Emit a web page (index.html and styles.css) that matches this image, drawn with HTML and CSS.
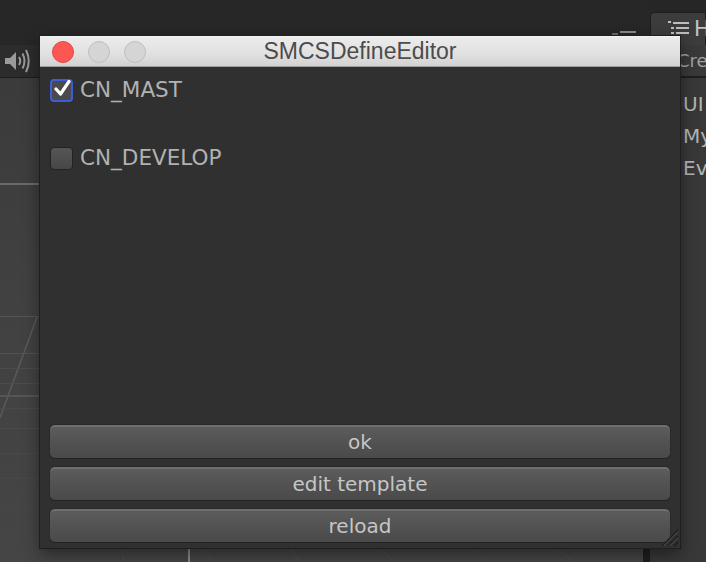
FILE: index.html
```html
<!DOCTYPE html>
<html>
<head>
<meta charset="utf-8">
<link rel="stylesheet" href="styles.css">
</head>
<body>
<div class="editor">
  <div class="top-left">
    <svg class="menu-stub" width="24" height="5" viewBox="0 0 24 5">
      <rect x="8" y="0" width="16" height="2" fill="#8a8a8a"/>
      <rect x="0" y="2" width="6" height="3" fill="#6a6a6a"/>
    </svg>
  </div>
  <div class="top-right">
    <div class="tab">
      <svg class="list-icon" width="22" height="16" viewBox="0 0 22 16">
        <rect x="0" y="0" width="3" height="2" fill="#bdbdbd"/>
        <rect x="5" y="1" width="16" height="2" fill="#bdbdbd"/>
        <rect x="3" y="6" width="3" height="2" fill="#bdbdbd"/>
        <rect x="8" y="6" width="13" height="2" fill="#bdbdbd"/>
        <rect x="3" y="11" width="3" height="2" fill="#bdbdbd"/>
        <rect x="8" y="11" width="13" height="2" fill="#bdbdbd"/>
      </svg>
      <span class="tab-label">H</span>
    </div>
  </div>
  <div class="scene-toolbar">
    <svg class="speaker" width="28" height="26" viewBox="0 0 28 26">
      <path d="M1 10 L6 10 L12 4 L12 22 L6 16 L1 16 Z" fill="#9a9a9a"/>
      <path d="M15 9 Q17.5 13 15 17" stroke="#9a9a9a" stroke-width="2" fill="none"/>
      <path d="M18.5 5.5 Q22.5 13 18.5 20.5" stroke="#9a9a9a" stroke-width="2" fill="none"/>
      <path d="M22 2 Q27.5 13 22 24" stroke="#9a9a9a" stroke-width="2" fill="none"/>
    </svg>
  </div>
  <div class="hier-toolbar"><span class="create">Create</span></div>
  <div class="scene">
    <svg class="grid" width="650" height="484" viewBox="0 0 650 484">
      <rect x="0" y="105" width="650" height="2" fill="#6a6a6a"/>
      <rect x="0" y="238" width="650" height="1" fill="#555"/>
      <line x1="37" y1="239" x2="0" y2="340" stroke="#5a5a5a" stroke-width="1.5"/>
      <rect x="0" y="275" width="650" height="1" fill="#525252"/>
      <rect x="0" y="290" width="650" height="1" fill="#4c4c4c"/>
      <rect x="0" y="305" width="650" height="1" fill="#4c4c4c"/>
      <rect x="0" y="317" width="650" height="2" fill="#555"/>
      <rect x="0" y="330" width="650" height="1" fill="#4a4a4a"/>
      <rect x="0" y="350" width="650" height="1" fill="#4a4a4a"/>
      <rect x="0" y="375" width="650" height="1" fill="#484848"/>
      <rect x="0" y="400" width="650" height="1" fill="#484848"/>
      <rect x="0" y="430" width="650" height="1" fill="#474747"/>
      <line x1="189" y1="465" x2="189" y2="484" stroke="#8a8a8a" stroke-width="2"/>
      <line x1="120" y1="470" x2="125" y2="484" stroke="#4d4d4d" stroke-width="1"/>
      <line x1="205" y1="470" x2="212" y2="484" stroke="#4d4d4d" stroke-width="1"/>
      <line x1="290" y1="470" x2="300" y2="484" stroke="#4d4d4d" stroke-width="1"/>
      <line x1="380" y1="470" x2="395" y2="484" stroke="#4d4d4d" stroke-width="1"/>
      <line x1="470" y1="470" x2="488" y2="484" stroke="#4d4d4d" stroke-width="1"/>
      <line x1="555" y1="470" x2="575" y2="484" stroke="#4d4d4d" stroke-width="1"/>
      <rect x="643" y="465" width="7" height="19" fill="#1f1f1f"/>
    </svg>
  </div>
  <div class="hierarchy">
    <div class="hier-item">UI</div>
    <div class="hier-item">My</div>
    <div class="hier-item">Ev</div>
  </div>
</div>

<div class="window">
  <div class="titlebar">
    <div class="lights">
      <span class="light red"></span>
      <span class="light grey"></span>
      <span class="light grey"></span>
    </div>
    <div class="title">SMCSDefineEditor</div>
  </div>
  <div class="content">
    <div class="toggles">
      <label class="toggle">
        <span class="box checked">
          <svg width="18" height="18" viewBox="0 0 18 18">
            <path d="M3 9 L7.5 14 L16 1.5" stroke="#ffffff" stroke-width="3.2" fill="none" stroke-linecap="round" stroke-linejoin="round"/>
          </svg>
        </span>
        <span class="toggle-label">CN_MAST</span>
      </label>
      <label class="toggle">
        <span class="box"></span>
        <span class="toggle-label">CN_DEVELOP</span>
      </label>
    </div>
    <div class="buttons">
      <div class="btn">ok</div>
      <div class="btn">edit template</div>
      <div class="btn">reload</div>
    </div>
  </div>
  <svg class="grip" width="20" height="20" viewBox="0 0 20 20">
    <line x1="19" y1="3" x2="3" y2="19" stroke="#1c1c1c" stroke-width="1.5"/>
    <line x1="19" y1="9" x2="9" y2="19" stroke="#1c1c1c" stroke-width="1.5"/>
    <line x1="19" y1="15" x2="15" y2="19" stroke="#1c1c1c" stroke-width="1.5"/>
    <line x1="19" y1="4.5" x2="4.5" y2="19" stroke="#5a5a5a" stroke-width="0.8"/>
    <line x1="19" y1="10.5" x2="10.5" y2="19" stroke="#5a5a5a" stroke-width="0.8"/>
  </svg>
</div>
</body>
</html>
```
FILE: styles.css
```css
html, body {
  margin: 0;
  padding: 0;
}
body {
  width: 706px;
  height: 562px;
  overflow: hidden;
  position: relative;
  background: #262626;
  font-family: "DejaVu Sans", Verdana, sans-serif;
}

.editor {
  display: grid;
  grid-template-columns: 1fr 56px;
  grid-template-rows: 12px 33px 33px 484px;
  width: 706px;
  height: 562px;
}

.top-left {
  grid-column: 1;
  grid-row: 1 / span 2;
  background: #272727;
  display: flex;
  justify-content: flex-end;
  align-items: flex-end;
  padding: 0 14px 9px 0;
}
.menu-stub {
  display: block;
}
.top-right {
  grid-column: 2;
  grid-row: 1 / span 2;
  display: flex;
  flex-direction: column;
  justify-content: flex-end;
}
.tab {
  height: 33px;
  background: #3c3c3c;
  border: 1px solid #1e1e1e;
  border-bottom: none;
  border-radius: 4px 0 0 0;
  box-sizing: border-box;
  display: flex;
  align-items: center;
  padding-left: 17px;
  gap: 4px;
}
.list-icon {
  display: block;
  flex: none;
}
.tab-label {
  color: #c4c4c4;
  font-size: 21px;
  line-height: 1;
}

.scene-toolbar {
  grid-column: 1;
  grid-row: 3;
  background: #2c2c2c;
  border-bottom: 1px solid #1d1d1d;
  display: flex;
  align-items: center;
  padding-left: 4px;
}
.speaker {
  display: block;
}
.hier-toolbar {
  grid-column: 2;
  grid-row: 3;
  background: #393939;
  border-bottom: 2px solid #1e1e1e;
  display: flex;
  align-items: center;
  padding-left: 27px;
  overflow: hidden;
}
.create {
  color: #a0a0a0;
  font-size: 18px;
  white-space: nowrap;
}

.scene {
  grid-column: 1;
  grid-row: 4;
  background: linear-gradient(180deg, #3b3b3b 0%, #414141 45%, #454545 100%);
  overflow: hidden;
}
.grid {
  display: block;
}
.hierarchy {
  grid-column: 2;
  grid-row: 4;
  background: #383838;
  padding-left: 33px;
  padding-top: 15px;
  display: flex;
  flex-direction: column;
  gap: 9px;
  overflow: hidden;
}
.hier-item {
  color: #b4b4b4;
  font-size: 20px;
  line-height: 23px;
  white-space: nowrap;
}

/* floating window */
.window {
  position: absolute;
  left: 40px;
  top: 36px;
  width: 640px;
  height: 512px;
  background: #303030;
  box-shadow: 0 0 0 1px #1f1f1f, 0 6px 16px rgba(0, 0, 0, 0.45);
  display: flex;
  flex-direction: column;
}
.titlebar {
  height: 31px;
  flex: none;
  background: linear-gradient(180deg, #ececec 0%, #e0e0e0 60%, #d2d2d2 100%);
  border-top: 1px solid #f2f2f2;
  border-bottom: 1px solid #9d9d9d;
  box-sizing: border-box;
  display: grid;
  grid-template-columns: 1fr;
  align-items: center;
}
.lights {
  grid-area: 1 / 1;
  display: flex;
  gap: 14px;
  padding-left: 12px;
}
.light {
  width: 22px;
  height: 22px;
  border-radius: 50%;
  box-sizing: border-box;
}
.light.red {
  background: #fc5753;
  border: 1px solid #df4744;
}
.light.grey {
  background: #d5d5d5;
  border: 1px solid #bfbfbf;
}
.title {
  grid-area: 1 / 1;
  text-align: center;
  font-family: "Liberation Sans", Arial, sans-serif;
  font-size: 23px;
  color: #4c4c4c;
  line-height: 29px;
}

.content {
  flex: 1;
  display: flex;
  flex-direction: column;
  justify-content: space-between;
  padding: 11px 10px 6px 10px;
}
.toggles {
  display: flex;
  flex-direction: column;
  gap: 44px;
}
.toggle {
  display: flex;
  align-items: center;
  gap: 7px;
  height: 24px;
}
.box {
  width: 23px;
  height: 23px;
  box-sizing: border-box;
  border-radius: 4px;
  background: linear-gradient(180deg, #555555 0%, #474747 100%);
  border: 1px solid #222;
  display: flex;
  align-items: center;
  justify-content: center;
  flex: none;
}
.box.checked {
  border: 2px solid #3c5ddb;
  background: #4a4a4a;
}
.box svg {
  display: block;
  margin-top: -3px;
  margin-left: 1px;
}
.toggle-label {
  color: #b2b2b2;
  font-size: 21.5px;
  line-height: 24px;
}

.buttons {
  display: flex;
  flex-direction: column;
  gap: 9px;
}
.btn {
  height: 33px;
  box-sizing: border-box;
  border-radius: 5px;
  background: linear-gradient(180deg, #5c5c5c 0%, #525252 50%, #4a4a4a 100%);
  border-top: 2px solid #6f6f6f;
  box-shadow: 0 1px 0 #222, 0 0 0 1px #2a2a2a;
  color: #c6c6c6;
  font-size: 20px;
  line-height: 30px;
  text-align: center;
}

.grip {
  position: absolute;
  right: 1px;
  bottom: 1px;
}
```
